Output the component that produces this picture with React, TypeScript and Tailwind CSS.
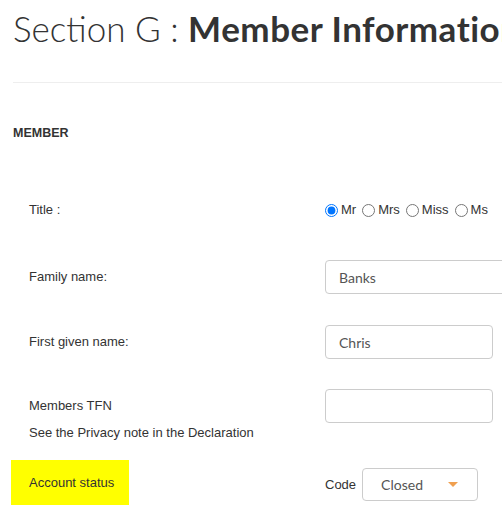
import React from 'react'

const Row = ({ label, children, className = '' }: { label: React.ReactNode; children?: React.ReactNode; className?: string }) => (
  <div className={`flex items-center ${className}`}>
    <div className="w-[312px] shrink-0 pl-4 text-[13px] text-[#333]">{label}</div>
    <div className="flex items-center">{children}</div>
  </div>
)

const App = () => {
  const titles = ['Mr', 'Mrs', 'Miss', 'Ms']

  return (
    <div className="h-[522px] w-[502px] overflow-hidden bg-white pl-[13px] font-['Liberation_Sans',Arial,sans-serif]">
      <h1 className="mt-[11px] whitespace-nowrap font-['Lato',sans-serif] text-[35px] leading-none text-[#333]">
        <span className="font-light">Section G : </span>
        <span className="font-bold tracking-[0.5px]">Member Information</span>
      </h1>
      <div className="mt-[36px] border-t border-[#eee]" />

      <div className="mt-[42px] text-[12.5px] font-bold leading-4 text-[#333]">MEMBER</div>

      <Row label="Title :" className="mt-[52px] h-[34px]">
        <div className="flex items-center text-[13px] text-[#333]">
          {titles.map((t, i) => (
            <label key={t} className="mr-[6px] flex items-center">
              <input type="radio" name="title" defaultChecked={i === 0} className="m-0 mr-[3px] h-[13px] w-[13px]" />
              {t}
            </label>
          ))}
        </div>
      </Row>

      <Row label="Family name:" className="mt-[33px] h-[34px]">
        <input
          defaultValue="Banks"
          className="h-[34px] w-[200px] rounded-[4px] border border-[#ccc] px-[13px] font-['Lato',sans-serif] text-[14px] text-[#555] outline-none"
        />
      </Row>

      <Row label="First given name:" className="mt-[31px] h-[34px]">
        <input
          defaultValue="Chris"
          className="h-[34px] w-[168px] rounded-[4px] border border-[#ccc] px-[13px] font-['Lato',sans-serif] text-[14px] text-[#555] outline-none"
        />
      </Row>

      <Row label="Members TFN" className="mt-[30px] h-[34px]">
        <input className="h-[34px] w-[168px] rounded-[4px] border border-[#ccc] px-[13px] text-[14px] outline-none" />
      </Row>
      <div className="mt-[2px] pl-4 text-[13px] leading-[15px] text-[#333]">See the Privacy note in the Declaration</div>

      <div className="mt-[20px] flex items-center">
        <div className="w-[312px] shrink-0">
          <div className="-ml-[2px] flex h-[45px] w-[118px] items-center bg-[#ffff00] pl-[18px] text-[13px] text-[#333]">
            Account status
          </div>
        </div>
        <div className="flex items-center pt-[4px] text-[13px] text-[#333]">
          <span className="mr-[6px]">Code</span>
          <div className="flex h-[33px] w-[116px] items-center justify-between rounded-[4px] border border-[#ccc] pl-[18px] pr-[19px] font-['Lato',sans-serif] text-[14px] text-[#555]">
            Closed
            <span className="h-0 w-0 border-x-[5px] border-t-[5px] border-x-transparent border-t-[#f0a050]" />
          </div>
        </div>
      </div>
    </div>
  )
}

export default App
